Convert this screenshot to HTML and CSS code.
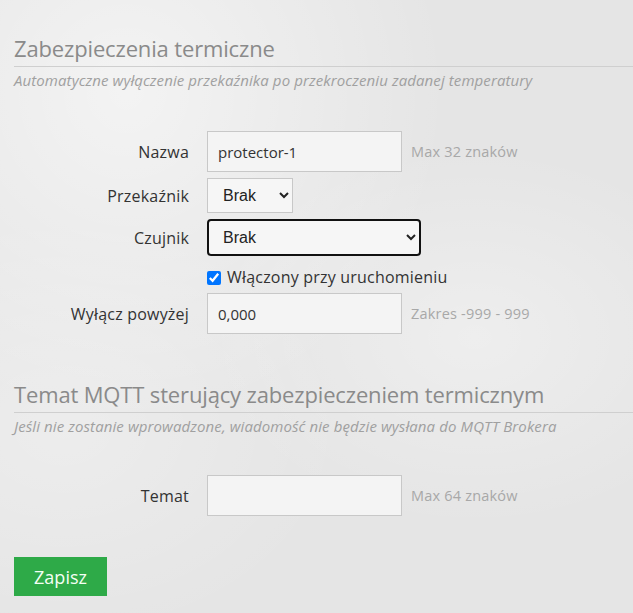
FILE: index.html
```html
<!DOCTYPE html>
<html lang="pl">
<head>
    <meta charset="UTF-8">
    <meta name="viewport" content="width=device-width, initial-scale=1.0">
    <title>Zabezpieczenia termiczne</title>
    <link rel="stylesheet" href="styles.css">
</head>
<body>
    <form class="page">
        <!-- Section: thermal protection -->
        <fieldset class="section">
            <h2>Zabezpieczenia termiczne</h2>
            <p class="desc">Automatyczne wyłączenie przekaźnika po przekroczeniu zadanej temperatury</p>

            <div class="fields">
                <div class="row">
                    <label for="name">Nazwa</label>
                    <input type="text" id="name" class="text" value="protector-1">
                    <span class="hint">Max 32 znaków</span>
                </div>
                <div class="row row-select">
                    <label for="relay">Przekaźnik</label>
                    <select id="relay" class="select small"><option>Brak</option></select>
                </div>
                <div class="row row-select">
                    <label for="sensor">Czujnik</label>
                    <select id="sensor" class="select wide focus"><option>Brak</option></select>
                </div>
                <div class="row row-check">
                    <span></span>
                    <label class="check"><input type="checkbox" checked> Włączony przy uruchomieniu</label>
                </div>
                <div class="row">
                    <label for="limit">Wyłącz powyżej</label>
                    <input type="text" id="limit" class="text" value="0,000">
                    <span class="hint">Zakres -999 - 999</span>
                </div>
            </div>
        </fieldset>

        <!-- Section: MQTT topic -->
        <fieldset class="section">
            <h2>Temat MQTT sterujący zabezpieczeniem termicznym</h2>
            <p class="desc">Jeśli nie zostanie wprowadzone, wiadomość nie będzie wysłana do MQTT Brokera</p>

            <div class="fields fields-mqtt">
                <div class="row">
                    <label for="topic">Temat</label>
                    <input type="text" id="topic" class="text" value="">
                    <span class="hint">Max 64 znaków</span>
                </div>
            </div>
        </fieldset>

        <button type="button" class="save">Zapisz</button>
    </form>
</body>
</html>
```

FILE: styles.css
```css
/* Global Styles */
body {
    margin: 0;
    min-height: 613px;
    font-family: "Open Sans", Arial, sans-serif;
    color: #333;
    background-color: #e5e5e5;
    background-image:
        radial-gradient(ellipse at 20% 15%, rgba(255, 255, 255, 0.55), rgba(255, 255, 255, 0) 45%),
        radial-gradient(ellipse at 75% 55%, rgba(255, 255, 255, 0.35), rgba(255, 255, 255, 0) 40%),
        radial-gradient(ellipse at 10% 70%, rgba(255, 255, 255, 0.3), rgba(255, 255, 255, 0) 35%);
}

.page {
    padding: 34px 0 0 14px;
}

.section {
    border: none;
    margin: 0;
    padding: 0;
}

h2 {
    margin: 0;
    padding-bottom: 4px;
    font-size: 22px;
    font-weight: 400;
    letter-spacing: -0.15px;
    color: #8a8a8a;
    border-bottom: 1px solid #cfcfcf;
    line-height: 28px;
}

.desc {
    margin: 4px 0 0;
    font-size: 15px;
    font-style: italic;
    color: #a0a0a0;
    letter-spacing: 0.1px;
    line-height: 18px;
}

.fields {
    margin-top: 42px;
    display: flex;
    flex-direction: column;
    gap: 6px;
}

.fields-mqtt {
    margin-top: 40px;
}

.row {
    display: grid;
    grid-template-columns: 175px auto auto;
    justify-content: start;
    align-items: center;
    column-gap: 18px;
}

.row > label {
    text-align: right;
    font-size: 16px;
    letter-spacing: 0.2px;
    color: #333;
}

.text {
    width: 195px;
    height: 41px;
    box-sizing: border-box;
    padding: 0 10px;
    font-family: "Open Sans", Arial, sans-serif;
    font-size: 15px;
    color: #333;
    background: #f4f4f4;
    border: 1px solid #c8c8c8;
    border-radius: 0;
}

.hint {
    margin-left: -9px;
    font-size: 14.5px;
    letter-spacing: 0.2px;
    color: #a8a8a8;
}

.select {
    height: 35px;
    box-sizing: border-box;
    padding: 0 8px 0 11px;
    font-family: "Liberation Sans", Arial, sans-serif;
    font-size: 16px;
    color: #222;
    background: #f6f6f6;
    border: 1px solid #c8c8c8;
    border-radius: 0;
}

.small {
    width: 86px;
}

.wide {
    width: 214px;
    height: 37px;
    border: 2px solid #111;
    border-radius: 4px;
    padding-left: 10px;
}

.row-check {
    margin-top: 6px;
}

.check {
    font-size: 16px;
    line-height: 19px;
    color: #333;
    display: flex;
    align-items: center;
    gap: 6px;
}

.check input {
    margin: 0;
    width: 14px;
    height: 14px;
    accent-color: #0075ff;
}

.section + .section {
    margin-top: 46px;
}

.save {
    margin-top: 41px;
    width: 93px;
    height: 39px;
    border: none;
    background-color: #2eaa48;
    color: #f4fff4;
    font-family: "Open Sans", Arial, sans-serif;
    font-size: 18px;
    cursor: pointer;
}

.save:hover {
    background-color: #28993f;
}
```
